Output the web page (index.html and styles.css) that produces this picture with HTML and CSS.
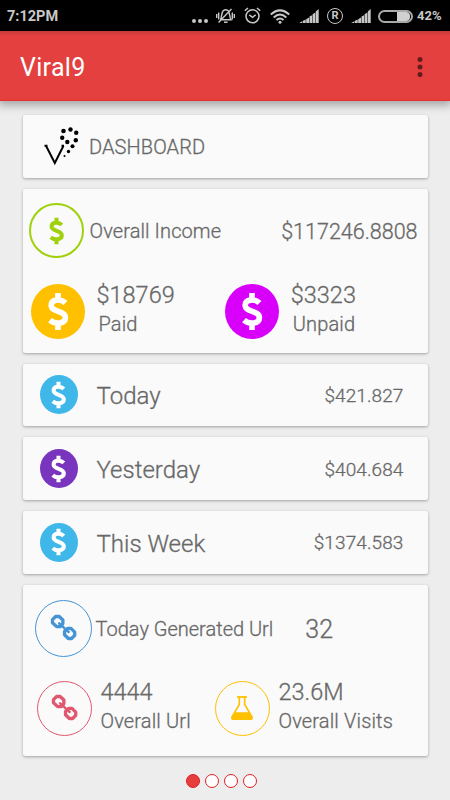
FILE: index.html
```html
<!DOCTYPE html>
<html lang="en">
<head>
<meta charset="utf-8">
<title>Viral9</title>
<link rel="stylesheet" href="styles.css">
</head>
<body>
<svg class="defs" aria-hidden="true">
  <symbol id="dollar" viewBox="-12 -20 24 40">
    <path d="M7.6 -8.7C3 -13.4 -7 -12.8 -7 -6.4C-7 1 7.6 -1.4 7.6 6.2C7.6 13 -3 13.5 -8.2 8.8M0 -19V-11M0 11V19" fill="none" stroke="currentColor" stroke-width="5.8"/>
  </symbol>
  <symbol id="chain" viewBox="-13 -13 26 26">
    <g fill="none" stroke="currentColor" stroke-width="3.2" stroke-linejoin="round" stroke-linecap="round">
      <path d="M-7.6 -10.6H-4.2L-.6 -7.2V-3.8L-3.2 -.8H-6.6L-10.6 -4.6V-7.6ZM4.2 .8H7.2L10.8 4.4V7.6L7.8 10.6H4.6L1 7V3.8Z"/>
      <path d="M-4.2 -4L-3.2 -3M-1.6 -1.8L2 1.8M3.8 3.2L5 4.3" stroke-width="2.4"/>
    </g>
  </symbol>
  <symbol id="signal" viewBox="0 0 20 14">
    <path d="M0 14L3 12.5V14ZM3.6 12L6.7 10.6V14H3.6ZM7.2 10.2L10 8.4V14H7.2ZM10.5 7.6L13.1 6.2V14H10.5ZM13.6 5.2L16.3 3.6V14H13.6ZM16.8 2.5L19.7 0V14H16.8Z" fill="currentColor"/>
  </symbol>
</svg>

<header class="status">
  <span class="clock">7:12PM</span>
  <svg class="more" viewBox="0 0 16 4"><circle cx="2" cy="2" r="2"/><circle cx="8" cy="2" r="2"/><circle cx="14" cy="2" r="2"/></svg>
  <svg class="mute" viewBox="0 0 19 16" fill="none" stroke="currentColor" stroke-width="1.4">
    <path d="M4.5 11.5C6 10 5 4.5 7.5 2.5Q9.5 1 12 2.5C14 4 13.3 9.5 15 11.8H4M8 14.3H11.5M2.5 14.5L15.5 1M.7 6V10M2.7 4.5V11.5M16.3 4.5V11.5M18.3 6V10"/>
  </svg>
  <svg class="alarm" viewBox="0 0 17 17" fill="none" stroke="currentColor" stroke-width="1.5">
    <circle cx="8.5" cy="9.3" r="6.5"/><path d="M5.3 7.8L8.5 10.3L11.7 7.8M.8 3.8L4 1M16.2 3.8L13 1"/>
  </svg>
  <svg class="wifi" viewBox="0 0 20 15" fill="none" stroke="currentColor" stroke-width="2">
    <path d="M.8 5.5Q10 -2.8 19.2 5.5M3.7 8.4Q10 2.6 16.3 8.4M6.5 11.1Q10 7.8 13.5 11.1"/><circle cx="10" cy="13.2" r="1.5" fill="currentColor" stroke="none"/>
  </svg>
  <svg class="signal"><use href="#signal"/></svg>
  <span class="roaming">R</span>
  <svg class="signal second"><use href="#signal"/></svg>
  <span class="battery"><span class="charge"></span></span>
  <span class="percent">42%</span>
</header>

<div class="appbar">
  <h1>Viral9</h1>
  <svg class="menu" viewBox="0 0 6 20"><circle cx="3" cy="2.6" r="2.5"/><circle cx="3" cy="10.1" r="2.5"/><circle cx="3" cy="17.6" r="2.5"/></svg>
</div>

<main>
  <section class="card heading">
    <svg class="logo" viewBox="0 0 36 40">
      <path d="M2 18.8L10.8 36L19.5 18.8M.5 18.8H3.5M17.5 18.8H20" fill="none" stroke="#000" stroke-width="2"/>
      <circle cx="19.5" cy="4" r="2.3"/><circle cx="26.5" cy="2.5" r="2.2"/><circle cx="32.2" cy="5.8" r="2.2"/><circle cx="31.8" cy="13.2" r="2.2"/><circle cx="18.2" cy="10.7" r="2.2"/><circle cx="23.3" cy="15" r="2.2"/><circle cx="28.5" cy="19.2" r="2"/><circle cx="24.5" cy="24.5" r="1.7"/><circle cx="20.5" cy="29" r="1"/>
    </svg>
    <span class="label">DASHBOARD</span>
  </section>

  <section class="card income">
    <div class="top">
      <div class="ring green"><svg class="small-dollar"><use href="#dollar"/></svg></div>
      <span class="label">Overall Income</span>
      <span class="total">$117246.8808</span>
    </div>
    <div class="pair">
      <div class="disc amber"><svg><use href="#dollar"/></svg></div>
      <div class="stat"><strong>$18769</strong><span>Paid</span></div>
      <div class="disc magenta"><svg><use href="#dollar"/></svg></div>
      <div class="stat"><strong>$3323</strong><span>Unpaid</span></div>
    </div>
  </section>

  <section class="card period">
    <div class="disc sky"><svg><use href="#dollar"/></svg></div>
    <span class="name">Today</span><span class="amount">$421.827</span>
  </section>
  <section class="card period">
    <div class="disc purple"><svg><use href="#dollar"/></svg></div>
    <span class="name">Yesterday</span><span class="amount">$404.684</span>
  </section>
  <section class="card period">
    <div class="disc sky"><svg><use href="#dollar"/></svg></div>
    <span class="name">This Week</span><span class="amount">$1374.583</span>
  </section>

  <section class="card urls">
    <div class="top">
      <div class="ring blue"><svg class="chain"><use href="#chain"/></svg></div>
      <span class="label">Today Generated Url</span>
      <span class="count">32</span>
    </div>
    <div class="pair">
      <div class="ring rose"><svg class="chain"><use href="#chain"/></svg></div>
      <div class="stat"><strong>4444</strong><span>Overall Url</span></div>
      <div class="ring yellow">
        <svg class="flask" viewBox="0 0 22 24"><path d="M6 1H16" fill="none" stroke="currentColor" stroke-width="1.8"/><path d="M8.3 1V8.5L1.2 20.5Q.4 23 2.5 23H19.5Q21.6 23 20.8 20.5L13.7 8.5V1" fill="none" stroke="currentColor" stroke-width="1.6"/><path d="M4 16.3H18L21.8 22Q22 24 19.5 24H2.5Q0 24 .2 22Z" fill="currentColor"/></svg>
      </div>
      <div class="stat"><strong>23.6M</strong><span>Overall Visits</span></div>
    </div>
  </section>
  <nav class="pages"><i class="current"></i><i></i><i></i><i></i></nav>
</main>
</body>
</html>
```

FILE: styles.css
```css
* { box-sizing: border-box; }
body {
  margin: 0;
  width: 450px;
  height: 800px;
  overflow: hidden;
  background: #ededed;
  color: #686868;
  font: 300 20px/24px Roboto, sans-serif;
  white-space: nowrap;
}
svg { display: block; flex: none; }
.defs { position: absolute; width: 0; height: 0; }

.status {
  height: 31px;
  display: flex;
  align-items: center;
  padding: 1px 0 0 7px;
  background: #000;
  color: #c8c8c8;
  font-size: 14.5px;
  font-weight: 700;
}
.clock { width: 185px; padding-top: 1px; }
.more { width: 16px; height: 4px; margin-top: 9px; fill: currentColor; }
.mute { width: 19px; height: 16px; margin-left: 8px; }
.alarm { width: 17px; height: 17px; margin-left: 9px; margin-top: -2px; }
.wifi { width: 20px; height: 15px; margin-left: 9px; }
.signal { width: 20px; height: 14px; margin-left: 9px; }
.roaming {
  width: 16px;
  height: 16px;
  margin-left: 8px;
  border: 1.5px solid;
  border-radius: 50%;
  font-size: 11px;
  line-height: 14px;
  text-align: center;
}
.second { margin-left: 8px; }
.battery {
  width: 35px;
  height: 13px;
  margin-left: 7px;
  padding: 0 1px;
  display: flex;
  justify-content: flex-end;
  border: 2px solid #aaa;
  border-radius: 7px;
}
.charge { width: 13px; background: #d0d0d0; border-radius: 0 4px 4px 0; }
.percent { margin-left: 4px; font-size: 13px; }

.appbar {
  position: relative;
  height: 70px;
  display: flex;
  align-items: center;
  justify-content: space-between;
  padding: 1px 27px 0 20px;
  background: linear-gradient(#c53a38, #e3403f 5px, #e3403f 68px, #e22f2c 70px);
  box-shadow: 0 2px 9px 2px rgba(0, 0, 0, .32);
}
h1 { margin: 2px 0 0; color: #fff; font-size: 25px; font-weight: 400; letter-spacing: .3px; }
.menu { width: 6px; height: 20px; fill: #641d1c; }

main { padding: 14px 22.5px 0; display: flex; flex-direction: column; gap: 11px; -webkit-text-stroke: .3px; }
.card {
  background: #fafafa;
  border-radius: 2.5px;
  box-shadow: 0 1px 3px rgba(0, 0, 0, .32);
}
.heading { height: 63px; display: flex; align-items: center; }
.period { height: 62.7px; display: flex; align-items: center; }
.logo { width: 36px; height: 40px; margin: 1px 9px 0 21.5px; }
.top, .pair { display: flex; align-items: center; }
.ring, .disc {
  flex: none;
  width: 55px;
  height: 55px;
  display: flex;
  align-items: center;
  justify-content: center;
  border-radius: 50%;
}
.ring { border: 1.7px solid; }
.green { border-width: 2px; }
.label { font-size: 20px; letter-spacing: .1px; }

.income { height: 163.5px; padding: 14px 10px 0 6.5px; }
.income .label { margin: 1px 0 0 5.5px; }
.total { margin: 2px 0 0 auto; font-size: 21.5px; }
.income .pair { margin-top: 26px; }
.small-dollar { width: 17px; height: 28px; }
.disc { color: #fff; }
.disc svg { width: 24px; height: 39px; }
.stat { display: flex; flex-direction: column; }
.stat strong { font-size: 23.5px; line-height: 29px; font-weight: inherit; }
.stat span { line-height: 28px; letter-spacing: .15px; }
.income .stat { width: 129px; margin: -4px 0 0 12px; }
.income .stat span { padding-left: 2px; }
.income .disc { width: 54px; height: 55px; margin-left: 1.5px; }
.income .pair .disc ~ .disc { margin-left: 1.5px; }
.green { color: #9fd10c; }
.amber { background: #ffc000; }
.magenta { background: #d900fb; }
.sky { background: #3fb7e9; }
.purple { background: #7935bd; }

.period { padding: 0 24px 0 17px; }
.period .disc { width: 38px; height: 39px; margin-right: 1px; }
.period .disc svg { width: 17px; height: 28px; }
.name { margin: 3px 0 0 18px; font-size: 24px; }
.amount { margin: 2px 0 0 auto; font-size: 19px; letter-spacing: .1px; }

.urls { height: 171px; padding: 15px 0 0 12px; }
.blue { width: 57px; height: 57px; color: #4594d5; }
.rose { color: #e05870; }
.yellow { color: #ffc000; }
.chain { width: 27px; height: 27px; margin-bottom: 2px; }
.flask { width: 22px; height: 24px; }
.urls .label { margin: 2px 0 0 4px; letter-spacing: 0; }
.count { margin: 3px 0 0 32px; font-size: 25px; }
.urls .pair { margin-top: 24px; padding-left: 2px; }
.urls .stat { width: 114px; margin: -3px 0 0 9px; }

.pages { display: flex; justify-content: center; gap: 5px; margin: 7px 7px 0 0; }
.pages i { width: 14px; height: 14px; border: 1.3px solid #df2024; border-radius: 50%; background: #fff; }
.pages .current { background: #e53e3d; }
```
